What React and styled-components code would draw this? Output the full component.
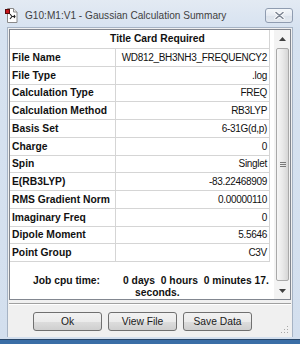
import styled, { createGlobalStyle } from "styled-components";

const Global = createGlobalStyle`
    html, body {
        margin: 0;
        padding: 0;
        width: 300px;
        height: 344px;
        overflow: hidden;
        background: #d7e3f1;
    }
    * {
        box-sizing: border-box;
    }
`

const rows = [
    ["File Name", "WD812_BH3NH3_FREQUENCY2"],
    ["File Type", ".log"],
    ["Calculation Type", "FREQ"],
    ["Calculation Method", "RB3LYP"],
    ["Basis Set", "6-31G(d,p)"],
    ["Charge", "0"],
    ["Spin", "Singlet"],
    ["E(RB3LYP)", "-83.22468909"],
    ["RMS Gradient Norm", "0.00000110"],
    ["Imaginary Freq", "0"],
    ["Dipole Moment", "5.5646"],
    ["Point Group", "C3V"],
]

const Frame = styled.div`
    width: 300px;
    height: 344px;
    display: flex;
    flex-direction: column;
    background: linear-gradient(#e3eaf3, #d6e2f0 30px, #d3dfee);
    font-family: "Liberation Sans", Arial, sans-serif;
`
const TitleBar = styled.div`
    height: 27px;
    flex: none;
    display: flex;
    align-items: center;
    padding: 4px 7px 0 5px;
`
const Caption = styled.span`
    margin-left: 6px;
    font-size: 10.1px;
    color: #3f3f3f;
    white-space: nowrap;
`
const CloseBtn = styled.div`
    margin-left: auto;
    width: 28px;
    height: 15px;
    border: 1px solid #8f9cb0;
    border-radius: 3px;
    background: linear-gradient(#f4f7fa, #e6ebf2 50%, #dbe2eb 51%, #e3e9f0);
    display: flex;
    align-items: center;
    justify-content: center;
`
const Client = styled.div`
    position: relative;
    flex: 1;
    margin: 0 7px 2px 7px;
    border: 1px solid #a6b3c4;
    border-bottom: none;
    background: #f0f0f0;
    padding: 1px 1px 0 1px;
    display: flex;
    flex-direction: column;
`
const SummaryBox = styled.div`
    height: 271px;
    flex: none;
    border: 1px solid #828790;
    background: #fff;
    display: flex;
`
const Sheet = styled.div`
    width: 260px;
    display: flex;
    flex-direction: column;
`
const HeaderRow = styled.div`
    height: 19px;
    border-bottom: 1px solid #d5d5d5;
    border-right: 1px solid #d5d5d5;
    font-size: 10.3px;
    font-weight: bold;
    color: #111;
    text-align: center;
    padding-left: 36px;
    line-height: 18px;
`
const Row = styled.div`
    height: 17.75px;
    display: grid;
    grid-template-columns: 106px 154px;
    border-bottom: 1px solid #d5d5d5;
`
const Cell = styled.div`
    border-right: 1px solid #d5d5d5;
    display: flex;
    align-items: center;
    white-space: nowrap;
    overflow: hidden;
    color: #111;
    ${props => props.$label ? `
        font-weight: bold;
        font-size: 10.3px;
        padding-left: 2px;
    ` : `
        justify-content: flex-end;
        font-size: 10px;
        letter-spacing: -0.3px;
        padding-right: 2px;
    `}
`
const CpuTime = styled.div`
    flex: 1;
    display: flex;
    padding-top: 13px;
    font-size: 10.3px;
    font-weight: bold;
    line-height: 12px;
    color: #111;
`
const CpuLabel = styled.div`
    width: 90px;
    text-align: right;
`
const CpuValue = styled.div`
    margin-left: 23px;
    white-space: pre;
    span {
        display: block;
        padding-left: 12px;
    }
`
const ScrollBar = styled.div`
    margin-left: auto;
    width: 16px;
    display: flex;
    flex-direction: column;
    background: #f3f3f3;
`
const Arrow = styled.div`
    height: 17px;
    display: flex;
    align-items: center;
    justify-content: center;
`
const Track = styled.div`
    flex: 1;
    padding: 1px 1px 1px 2px;
    display: flex;
`
const Thumb = styled.div`
    flex: 1;
    border: 1px solid #a9a9a9;
    border-radius: 2px;
    background: linear-gradient(to right, #f7f7f7, #e9e9e9 50%, #d6d6d6);
    display: flex;
    align-items: center;
    justify-content: center;
`
const Separator = styled.div`
    margin-top: 3px;
    height: 2px;
    border-top: 1px solid #a0a0a0;
    border-bottom: 1px solid #ffffff;
`
const ButtonRow = styled.div`
    display: flex;
    gap: 6px;
    margin-top: 7px;
    padding-left: 24px;
`
const Button = styled.div`
    width: 69px;
    height: 19px;
    border: 1px solid #707070;
    border-radius: 3px;
    background: linear-gradient(#f2f2f2, #ebebeb 50%, #dddddd 51%, #cfcfcf);
    font-size: 10.3px;
    color: #1a1a1a;
    display: flex;
    align-items: center;
    justify-content: center;
`
const Grip = styled.div`
    position: absolute;
    right: 3px;
    bottom: 4px;
    line-height: 0;
`
const Taskbar = styled.div`
    height: 5px;
    flex: none;
    border-top: 1px solid #2a4768;
    background: #3a6ea6;
`

function AppIcon() {
    return (
        <svg width="14" height="15" viewBox="0 0 14 15">
            <path d="M2.5 0.5h6l3.5 3.5v10.5h-9.5z" fill="#fff" stroke="#8a8a8a" />
            <path d="M8.5 0.5v3.5h3.5" fill="#e8e8e8" stroke="#8a8a8a" />
            <path d="M5 6l2 2.5l-2 2.5M7 8.5h3M9 7l1 1.5l-1 1.5" fill="none" stroke="#222" strokeWidth="1.1" />
            <rect x="0.5" y="1.5" width="4" height="4" fill="#c8141a" stroke="#5a0a0a" />
        </svg>
    )
}

function CloseGlyph() {
    return (
        <svg width="11" height="9" viewBox="0 0 11 9">
            <path d="M2 1.5l7 6M9 1.5l-7 6" stroke="#fff" strokeWidth="3.2" strokeLinecap="round" />
            <path d="M2 1.5l7 6M9 1.5l-7 6" stroke="#7c8593" strokeWidth="1.6" strokeLinecap="round" />
        </svg>
    )
}

function Triangle({ down }) {
    return (
        <svg width="7" height="4" viewBox="0 0 7 4">
            <path d={down ? "M0 0h7l-3.5 4z" : "M0 4h7l-3.5-4z"} fill="#404040" />
        </svg>
    )
}

export default function App() {
    return (
        <Frame>
            <Global />
            <TitleBar>
                <AppIcon />
                <Caption>G10:M1:V1 - Gaussian Calculation Summary</Caption>
                <CloseBtn><CloseGlyph /></CloseBtn>
            </TitleBar>
            <Client>
                <SummaryBox>
                    <Sheet>
                        <HeaderRow>Title Card Required</HeaderRow>
                        {rows.map(([label, value]) => (
                            <Row key={label}>
                                <Cell $label>{label}</Cell>
                                <Cell>{value}</Cell>
                            </Row>
                        ))}
                        <CpuTime>
                            <CpuLabel>Job cpu time:</CpuLabel>
                            <CpuValue>
                                {"0 days  0 hours  0 minutes 17."}
                                <span>seconds.</span>
                            </CpuValue>
                        </CpuTime>
                    </Sheet>
                    <ScrollBar>
                        <Arrow><Triangle /></Arrow>
                        <Track>
                            <Thumb>
                                <svg width="6" height="6" viewBox="0 0 6 6">
                                    <path d="M0 0.5h6M0 2.5h6M0 4.5h6" stroke="#7a7a7a" />
                                </svg>
                            </Thumb>
                        </Track>
                        <Arrow><Triangle down /></Arrow>
                    </ScrollBar>
                </SummaryBox>
                <Separator />
                <ButtonRow>
                    <Button>Ok</Button>
                    <Button>View File</Button>
                    <Button>Save Data</Button>
                </ButtonRow>
                <Grip>
                    <svg width="8" height="8" viewBox="0 0 8 8">
                        <path d="M6 1h1v1h-1zM3 4h1v1h-1zM6 4h1v1h-1zM0 7h1v1h-1zM3 7h1v1h-1zM6 7h1v1h-1z" fill="#a8a8a8" />
                    </svg>
                </Grip>
            </Client>
            <Taskbar />
        </Frame>
    )
}
